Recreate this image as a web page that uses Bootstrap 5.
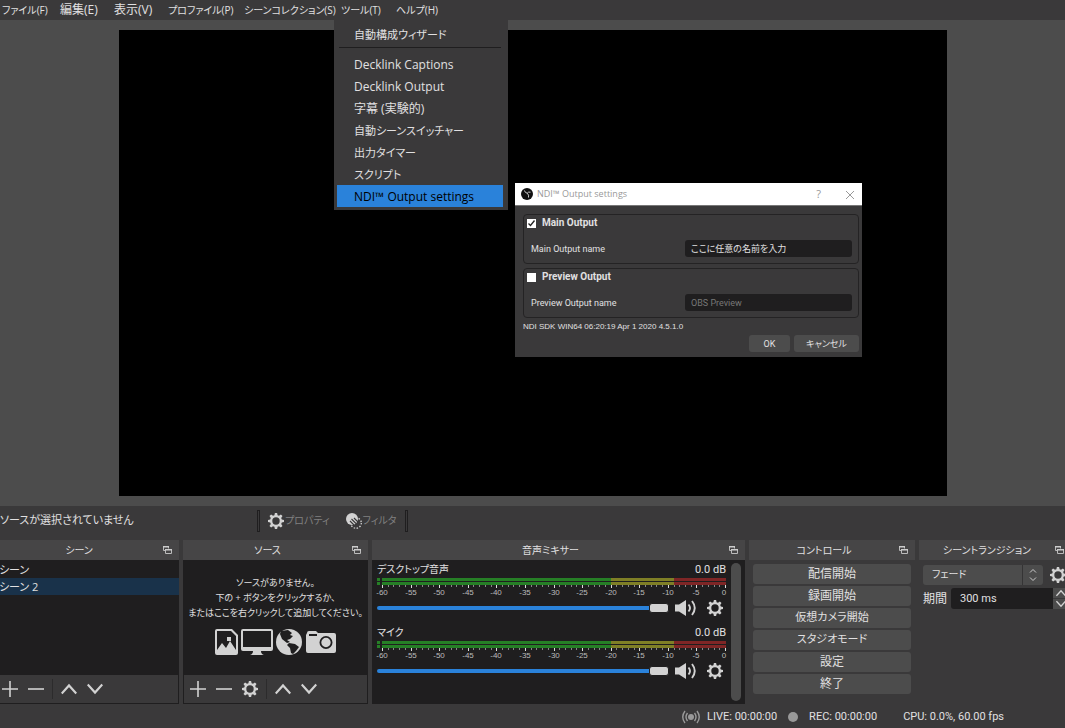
<!DOCTYPE html>
<html lang="ja">
<head>
<meta charset="utf-8">
<meta name="viewport" content="width=device-width, initial-scale=1">
<title>OBS</title>
<link href="https://cdn.jsdelivr.net/npm/bootstrap@5.3.0/dist/css/bootstrap.min.css" rel="stylesheet">
<style>
:root{--panel:#3a393a;--head:#4c4c4c;--dark:#1f1e1f;--btn:#4c4c4c;--fg:#e1e0e1;--blue:#2a82da}
body{background:var(--panel);color:var(--fg);font-family:"Open Sans","Noto Sans CJK JP",sans-serif;font-size:12px;line-height:16px;font-feature-settings:"palt";overflow:hidden}
.app-shell{min-height:100vh}
.gothic{font-family:Roboto,"Noto Sans CJK JP",sans-serif}
button,input,select{font:inherit;font-feature-settings:inherit;color:inherit}
.menubar{height:20px;display:grid;grid-template-columns:58px 54px 54px 76px 97px 55px auto;justify-content:start;padding-left:2px;font-size:10px;line-height:20px}
.menubar .wide{font-size:12px}
.menubar a{color:inherit;text-decoration:none;white-space:nowrap}
.menubar .tools-menu{left:-7px;top:20px;width:174px;background:var(--panel);padding:3px;z-index:5;font-size:11px}
.tools-menu a{display:block;height:22px;line-height:24px;padding-left:17px;margin-right:2px}
.tools-menu .latin{font-size:12px}
.tools-menu a.active{background:var(--blue);color:#000}
.tools-menu hr{margin:2px 4px 5px 2px;border-top:1px solid #1f1e1f;opacity:1}
.preview{background:var(--head);padding:10px}
.canvas16{background:#000;aspect-ratio:828/466;height:466px}
.ndi{left:515px;top:183px;width:347px;background:var(--panel);z-index:4;font-size:9px;line-height:12px}
.ndi-title{background:#fff;height:23px;color:#999;border-bottom:1px solid #777;font-size:9px;font-family:"Open Sans",sans-serif;padding:0 7px 0 6px}
.ndi-title button{padding:0;border:0;background:none;color:#999;line-height:12px;font-size:11px}
.ndi-body{padding:8px 3px 5px 8px}
.ndi-group{border:1px solid #242324;border-radius:4px;height:50px;padding:2px 6px 0 3px;margin-bottom:4px}
.ndi-group input[type=checkbox]{appearance:none;width:9px;height:9px;background:#fff;margin:0 6px 0 0}
.ndi-group input[type=checkbox]:checked{background:#fff url("data:image/svg+xml,%3Csvg xmlns='http://www.w3.org/2000/svg' viewBox='0 0 9 9'%3E%3Cpath d='M1.5 4.5l2 2 4-5' fill='none' stroke='%23222' stroke-width='1.3'/%3E%3C/svg%3E")}
.ndi-group .title-label{font-weight:bold;font-size:10px}
.ndi-group input[type=text]{width:167px;height:17px;border:0;border-radius:3px;background:var(--dark);padding:0 6px}
.ndi-group input:disabled{color:#777}
.ndi .field{margin-top:11px;padding-left:4px;height:17px}
.sdk{font-family:"Liberation Sans",sans-serif;font-size:8px;line-height:9px}
.okbtn{width:41px}
.cancelbtn{width:65px}
.flatbtn{background:var(--btn);border:0;border-radius:3px;padding:0}
.ndi .flatbtn{height:17px;font-size:9px}
.ctxbar{height:30px;margin-bottom:4px}
.ctxbar .sep{width:3px;height:22px;border:1px solid #1f1e1f}
.ctxbar button{background:none;border:0;padding:0;color:#808080}
.ctxbar button span{font-size:10px;padding-left:1px}
.ctxlabel{width:257px;font-size:11px}
.docks{display:grid;grid-template-columns:minmax(0,184fr) minmax(0,185fr) minmax(0,373fr) minmax(0,166fr) minmax(0,152fr);gap:4px;margin:0 -6px 0 -5px;height:164px}
.dock-head{background:#464546;height:20px;padding:0 7px 0 0;font-size:10px}
.dock-head button{border:0;background:none;padding:0;line-height:0}
.dock-body{background:var(--dark);height:144px}
.scene-list{padding-top:1px;font-size:11px}
.scene-item{height:17px;line-height:17px;padding-left:4px}
.scene-item.sel{background:#19324a}
.toolrow{height:28px;background:var(--panel);margin:0 1px 1px;gap:10px;padding-left:6px}
.toolrow button{border:0;background:none;padding:0;line-height:0}
.toolrow .vr{background:#2c2b2c;opacity:1;height:20px;align-self:center;margin:0 -2px}
.empty-area{padding-bottom:4px;gap:8px}
.empty-note{line-height:15px;text-align:center;white-space:nowrap;font-size:9px}
.mixer{padding:2px 19px 0 5px}
.mixer-bar{width:10px;background:#4c4c4c;border-radius:5px;right:4px;top:3px;bottom:3px}
.strip{height:63px;font-size:11px;line-height:15px}
.strip label{font-size:10px}
.scale{display:block;width:100%;height:23px;overflow:visible}
.scale text{font-family:"Liberation Sans",sans-serif;font-size:8px;fill:#bbb;text-anchor:middle}
.vol{appearance:none;flex:1;min-width:0;height:10px;background:none;margin:0}
.vol::-webkit-slider-runnable-track{height:4px;border-radius:2px;background:var(--blue)}
.vol::-webkit-slider-thumb{appearance:none;width:20px;height:10px;margin-top:-3px;border-radius:3px;background:#d2d2d2;border:1px solid #1f1e1f}
.strip button,.trans button{border:0;background:none;padding:0;line-height:0}
.strip .mutebtn{margin:0 10px 0 6px}
.strip .cfgbtn{margin-right:3px}
.ctl{padding:4px 4px 0;gap:2px}
.ctl .flatbtn{height:20px;line-height:18px}
.ctl .kana{font-size:11px}
.trans{padding:5px 0 0 4px}
.trans .gearbtn{margin-left:7px}
.combo{appearance:none;width:120px;height:20px;border:0;border-radius:3px;padding:0 9px;font-size:10px;background:linear-gradient(#353435,#353435) 99px 0/1px 100% no-repeat,url("data:image/svg+xml,%3Csvg xmlns='http://www.w3.org/2000/svg' width='10' height='14'%3E%3Cpath d='M2 4.5l3-3 3 3M2 9.500l3 3 3-3' fill='none' stroke='%23ccc'/%3E%3C/svg%3E") 105px 3px no-repeat var(--btn)}
.durrow{margin-top:3px}
.durrow label{width:28px}
.durbox{width:102px;height:21px;border:0;border-radius:3px 0 0 3px;background:var(--dark);padding:0 9px;font-size:11px}
.spins{gap:1px}
.trans .spin{width:16px;height:10px;background:var(--btn)}
.status{height:22px;font-size:11px;margin-top:2px;padding-right:61px;white-space:nowrap}
.status .live{margin:0 11px 0 7px}
.status .rec{margin:0 26px 0 11px}
svg{flex:none}
</style>
</head>
<body>
<svg width="0" height="0" class="position-absolute">
<defs>
<symbol id="gear" viewBox="0 0 16 16"><path fill="#d2d2d2" fill-rule="evenodd" d="M6.900 0h2.200l.5 2.200 1.400.6 1.900-1.300 1.600 1.600-1.300 1.900.6 1.400 2.200.5v2.200l-2.200.5-.6 1.400 1.300 1.900-1.600 1.600-1.900-1.300-1.400.6-.5 2.200H6.900l-.5-2.200-1.400-.6-1.900 1.300-1.600-1.600 1.300-1.900-.6-1.400L0 9.100V6.900l2.200-.5.600-1.400L1.500 3.100l1.600-1.600L5 2.800l1.400-.6zM8 4.300a3.700 3.700 0 100 7.400 3.700 3.700 0 000-7.400z"/></symbol>
<symbol id="float" viewBox="0 0 9 8"><path fill="none" stroke="#bbb" d="M2.500 4.500h-2v-4h5v2M2.500 3.500h6v4h-6z"/><path fill="#ccc" d="M0 0h6v1.500H0zM2 3h7v1.500H2z"/></symbol>
<symbol id="plus" viewBox="0 0 16 16"><path stroke="#d2d2d2" stroke-width="1.600" d="M0 8h16M8 0v16"/></symbol>
<symbol id="minus" viewBox="0 0 16 16"><path stroke="#d2d2d2" stroke-width="1.600" d="M0 8h16"/></symbol>
<symbol id="up" viewBox="0 0 16 16"><path fill="none" stroke="#d2d2d2" stroke-width="2.200" d="M.7 12.500L8 4.500l7.300 8"/></symbol>
<symbol id="down" viewBox="0 0 16 16"><path fill="none" stroke="#d2d2d2" stroke-width="2.200" d="M.7 3.500l7.300 8 7.300-8"/></symbol>
<symbol id="speaker" viewBox="0 0 22 16"><path fill="#d2d2d2" d="M0 4.500h4L11 0v16l-7-4.500H0z"/><path fill="none" stroke="#d2d2d2" stroke-width="1.900" d="M13.500 4.500q3 3.500 0 7M17 1q5.500 7 0 14"/></symbol>
</defs>
</svg>
<div class="app-shell d-flex flex-column position-relative">
<nav class="menubar">
<a href="#">ファイル(F)</a><a href="#" class="wide">編集(E)</a><a href="#" class="wide">表示(V)</a><a href="#">プロファイル(P)</a><a href="#">シーンコレクション(S)</a>
<div class="position-relative"><a href="#">ツール(T)</a>
<div class="tools-menu position-absolute">
<a href="#">自動構成ウィザード</a><hr>
<a href="#" class="latin">Decklink Captions</a><a href="#" class="latin">Decklink Output</a><a href="#" class="latin">字幕 (実験的)</a><a href="#">自動シーンスイッチャー</a><a href="#">出力タイマー</a><a href="#">スクリプト</a><a href="#" class="latin active">NDI™ Output settings</a>
</div></div>
<a href="#">ヘルプ(H)</a>
</nav>
<main class="preview flex-grow-1 d-flex justify-content-center align-items-center"><div class="canvas16"></div></main>

<section class="ndi gothic position-absolute">
<div class="ndi-title d-flex align-items-center">
<svg width="12" height="12" viewBox="0 0 12 12" class="me-1"><circle cx="6" cy="6" r="6" fill="#111"/><g fill="none" stroke="#ccc" stroke-width="1"><path d="M3.500 2.500q.3 2.300 2.700 2.700M9.500 4.200q-2.300-.6-3.300 1M7.500 9.500q.8-2.500-1.300-4.300"/></g></svg>
<span class="me-auto">NDI™ Output settings</span><button aria-label="ヘルプ" class="me-4">?</button><button aria-label="閉じる"><svg width="10" height="10" viewBox="0 0 10 10"><path d="M1 1l8 8M9 1l-8 8" stroke="#999"/></svg></button>
</div>
<div class="ndi-body">
<div class="ndi-group"><div class="d-flex align-items-center"><input type="checkbox" id="mo" checked><label for="mo" class="title-label">Main Output</label></div>
<div class="field d-flex align-items-center justify-content-between"><label for="mon">Main Output name</label><input type="text" id="mon" value="ここに任意の名前を入力"></div></div>
<div class="ndi-group"><div class="d-flex align-items-center"><input type="checkbox" id="po"><label for="po" class="title-label">Preview Output</label></div>
<div class="field d-flex align-items-center justify-content-between"><label for="pon">Preview Output name</label><input type="text" id="pon" value="OBS Preview" disabled></div></div>
<div class="sdk">NDI SDK WIN64 06:20:19 Apr 1 2020 4.5.1.0</div>
<div class="d-flex justify-content-end gap-1 mt-1"><button class="flatbtn okbtn">OK</button><button class="flatbtn cancelbtn">キャンセル</button></div>
</div>
</section>

<div class="ctxbar gothic d-flex align-items-center">
<div class="ctxlabel">ソースが選択されていません</div>
<div class="sep"></div>
<button class="d-flex align-items-center ms-2"><svg width="16" height="16"><use href="#gear"/></svg><span>プロパティ</span></button>
<button class="d-flex align-items-center ms-3"><svg width="16" height="16" viewBox="0 0 16 16"><circle cx="10" cy="10" r="5.300" fill="none" stroke="#d2d2d2" stroke-width="1.300" stroke-dasharray="1.500 1.500"/><circle cx="6" cy="6" r="6" fill="#d2d2d2"/><path d="M4 8l4 4M5.500 6l5 5M8 5l4 4" stroke="#3a393a" stroke-width="1.100"/></svg><span>フィルタ</span></button>
<div class="sep ms-2"></div>
</div>

<div class="docks">
<section><div class="dock-head d-flex align-items-center"><span class="flex-grow-1 text-center">シーン</span><button aria-label="切り離す"><svg width="9" height="8"><use href="#float"/></svg></button></div>
<div class="dock-body d-flex flex-column"><div class="flex-grow-1 scene-list"><div class="scene-item">シーン</div><div class="scene-item sel">シーン 2</div></div>
<div class="toolrow d-flex align-items-center"><button aria-label="追加"><svg width="16" height="16"><use href="#plus"/></svg></button><button aria-label="削除"><svg width="16" height="16"><use href="#minus"/></svg></button><div class="vr"></div><button aria-label="上へ"><svg width="16" height="16"><use href="#up"/></svg></button><button aria-label="下へ"><svg width="16" height="16"><use href="#down"/></svg></button></div></div></section>

<section><div class="dock-head d-flex align-items-center"><span class="flex-grow-1 text-center">ソース</span><button aria-label="切り離す"><svg width="9" height="8"><use href="#float"/></svg></button></div>
<div class="dock-body d-flex flex-column"><div class="empty-area flex-grow-1 d-flex flex-column align-items-center justify-content-center">
<div class="empty-note">ソースがありません。<br>下の + ボタンをクリックするか、<br>またはここを右クリックして追加してください。</div>
<svg width="122" height="28" viewBox="0 0 122 28" fill="#d2d2d2"><path fill-rule="evenodd" d="M2 1h15l6 6v18q0 2-2 2H2q-2 0-2-2V3q0-2 2-2zM2 3v19l5-7 4 5 4-7 6 9V8l-5-5zM12 9h4v4h-4z"/><path fill-rule="evenodd" d="M28 1h28q2 0 2 2v18q0 2-2 2H46q0 3 3 4H35q3-1 3-4H28q-2 0-2-2V3q0-2 2-2zM28 3v16h28V3z"/><circle cx="74" cy="14" r="13"/><path fill="#1f1e1f" d="M66 3l7-1 4 3-2 2 3 1-3 3-3 1 3 2-3 1-5-4-2-5zM74 15l6 1 4 3-3 4-3 3-2-1-1-5-3-3z"/><path fill-rule="evenodd" d="M92 5q0-2 2-2h7l2 2h16q2 0 2 2v16q0 2-2 2H93q-2 0-2-2V7zM94 6v2h8V6zM111 8a6.500 6.500 0 100 13 6.500 6.500 0 000-13zm0 1.800a4.700 4.700 0 110 9.400 4.700 4.700 0 010-9.400z"/></svg></div>
<div class="toolrow d-flex align-items-center"><button aria-label="追加"><svg width="16" height="16"><use href="#plus"/></svg></button><button aria-label="削除"><svg width="16" height="16"><use href="#minus"/></svg></button><button aria-label="設定"><svg width="16" height="16"><use href="#gear"/></svg></button><div class="vr"></div><button aria-label="上へ"><svg width="16" height="16"><use href="#up"/></svg></button><button aria-label="下へ"><svg width="16" height="16"><use href="#down"/></svg></button></div></div></section>

<section><div class="dock-head d-flex align-items-center"><span class="flex-grow-1 text-center">音声ミキサー</span><button aria-label="切り離す"><svg width="9" height="8"><use href="#float"/></svg></button></div>
<div class="dock-body mixer position-relative gothic">
<div class="strip"><div class="d-flex justify-content-between"><label for="v1">デスクトップ音声</label><span>0.0 dB</span></div><svg class="scale"></svg><div class="d-flex align-items-center"><input class="vol" id="v1" type="range" value="100"><button aria-label="ミュート" class="mutebtn"><svg width="22" height="16"><use href="#speaker"/></svg></button><button aria-label="音声設定" class="cfgbtn"><svg width="16" height="16"><use href="#gear"/></svg></button></div></div>
<div class="strip"><div class="d-flex justify-content-between"><label for="v2">マイク</label><span>0.0 dB</span></div><svg class="scale"></svg><div class="d-flex align-items-center"><input class="vol" id="v2" type="range" value="100"><button aria-label="ミュート" class="mutebtn"><svg width="22" height="16"><use href="#speaker"/></svg></button><button aria-label="音声設定" class="cfgbtn"><svg width="16" height="16"><use href="#gear"/></svg></button></div></div>
<div class="mixer-bar position-absolute"></div></div></section>

<section><div class="dock-head d-flex align-items-center"><span class="flex-grow-1 text-center">コントロール</span><button aria-label="切り離す"><svg width="9" height="8"><use href="#float"/></svg></button></div>
<div class="ctl gothic d-flex flex-column"><button class="flatbtn">配信開始</button><button class="flatbtn">録画開始</button><button class="flatbtn kana">仮想カメラ開始</button><button class="flatbtn kana">スタジオモード</button><button class="flatbtn">設定</button><button class="flatbtn">終了</button></div></section>

<section><div class="dock-head d-flex align-items-center"><span class="flex-grow-1 text-center">シーントランジション</span><button aria-label="切り離す"><svg width="9" height="8"><use href="#float"/></svg></button></div>
<div class="trans gothic"><div class="d-flex align-items-center"><select class="combo" aria-label="トランジション"><option>フェード</option></select><button class="gearbtn" aria-label="設定"><svg width="16" height="16"><use href="#gear"/></svg></button></div>
<div class="d-flex align-items-center durrow"><label for="dur">期間</label><input class="durbox" id="dur" value="300 ms"><div class="d-flex flex-column spins"><button class="spin" aria-label="増やす"><svg width="12" height="10" viewBox="0 0 16 16"><use href="#up"/></svg></button><button class="spin" aria-label="減らす"><svg width="12" height="10" viewBox="0 0 16 16"><use href="#down"/></svg></button></div></div></div></section>
</div>

<footer class="status gothic d-flex align-items-center justify-content-end">
<svg width="18" height="14" viewBox="0 0 18 14" fill="none" stroke="#999" stroke-width="1.400"><circle cx="9" cy="7" r="3" fill="#999" stroke="none"/><path d="M5.500 3q-3 4 0 8M12.500 3q3 4 0 8M3 1q-4.500 6 0 12M15 1q4.500 6 0 12"/></svg>
<span class="live">LIVE: 00:00:00</span>
<svg width="10" height="10"><circle cx="5" cy="5" r="5" fill="#999"/></svg>
<span class="rec">REC: 00:00:00</span><span>CPU: 0.0%, 60.00 fps</span></footer>
</div>
<script src="https://cdn.jsdelivr.net/npm/bootstrap@5.3.0/dist/js/bootstrap.bundle.min.js"></script>
<script>
// Meter from -60 dB to 0 dB; the first 5px hold the input peak indicator.
function drawScale(svg){
  const w=svg.getBoundingClientRect().width,x=db=>Math.round(5+(db+60)/60*(w-6));
  let s='';
  [1,5].forEach(y=>{
    s+=`<rect x="0" y="${y}" width="3" height="3" fill="#267f26"/>`;
    [[-60,-20,'#267f26'],[-20,-9,'#7f7f26'],[-9,0.2,'#7f2626']].forEach(([a,b,c])=>s+=`<rect x="${x(a)}" y="${y}" width="${x(b)-x(a)}" height="3" fill="${c}"/>`);
  });
  for(let d=-60;d<=0;d++){const m=d%5===0;s+=`<rect x="${x(d)}" y="8" width="1" height="${m?3:2}" fill="${m?'#ddd':'#888'}"/>`;
    if(m)s+=`<text x="${x(d)-(d===0?1:0)}" y="18">${d}</text>`;}
  svg.innerHTML=s;
}
const redraw=()=>document.querySelectorAll('.scale').forEach(drawScale);
redraw();addEventListener('resize',redraw);
</script>
</body>
</html>
